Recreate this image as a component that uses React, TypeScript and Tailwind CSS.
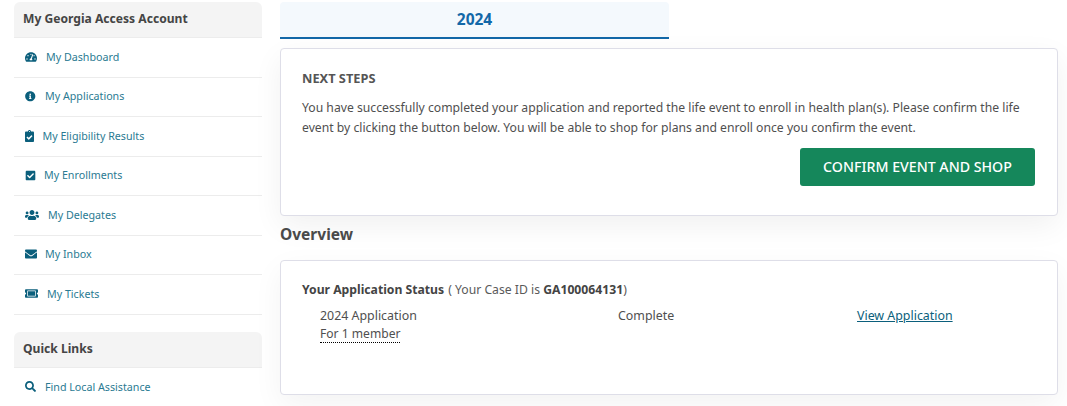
import React from "react";
import { FaTachometerAlt, FaInfoCircle, FaClipboardCheck, FaCheckSquare, FaUsers, FaEnvelope, FaTicketAlt, FaSearch } from "react-icons/fa";

const items = [
  { label: "My Dashboard", Icon: FaTachometerAlt, icon: "w-[12px] h-[12px]", gap: "gap-[9px]" },
  { label: "My Applications", Icon: FaInfoCircle, icon: "w-[10.5px] h-[10.5px]", gap: "gap-[9.5px]" },
  { label: "My Eligibility Results", Icon: FaClipboardCheck, icon: "w-[9px] h-[12px]", gap: "gap-[8.5px]" },
  { label: "My Enrollments", Icon: FaCheckSquare, icon: "w-[11px] h-[11px]", gap: "gap-[8px]" },
  { label: "My Delegates", Icon: FaUsers, icon: "w-[14px] h-[14px]", gap: "gap-[9px]" },
  { label: "My Inbox", Icon: FaEnvelope, icon: "w-[12px] h-[12px]", gap: "gap-[8px]" },
  { label: "My Tickets", Icon: FaTicketAlt, icon: "w-[13px] h-[13px]", gap: "gap-[9px]" },
];

function Row({ label, Icon, icon, gap, border = true }: { label: string; Icon: React.ComponentType<{ className?: string }>; icon: string; gap: string; border?: boolean }) {
  return (
    <a className={`flex h-[39.5px] items-center pb-[1px] pl-[11px] text-[10.7px] text-[#2a7a92] ${gap} ${border ? "border-b border-[#ececec]" : ""}`}>
      <Icon className={`shrink-0 text-[#0b5f7c] ${icon}`} />
      <span>{label}</span>
    </a>
  );
}

function SideHead({ children }: { children: React.ReactNode }) {
  return (
    <div className="flex h-[36px] items-center rounded-t-[6px] border-b border-[#ececec] bg-[#f4f4f4] pl-[9px] text-[12.1px] font-bold text-[#454545]">
      {children}
    </div>
  );
}

export default function App() {
  return (
    <div className="flex h-[406px] w-[1067px] items-start overflow-hidden bg-white pt-[2px] pl-[14px] font-['Noto_Sans',sans-serif] text-[#4f4f4f]">
      <aside className="w-[248px] shrink-0">
        <SideHead>My Georgia Access Account</SideHead>
        {items.map((i) => (
          <Row key={i.label} {...i} />
        ))}
        <div className="mt-[17px]">
          <SideHead>Quick Links</SideHead>
          <Row label="Find Local Assistance" Icon={FaSearch} icon="w-[11px] h-[11px]" gap="gap-[9px]" border={false} />
        </div>
      </aside>
      <main className="ml-[18px] w-[778px] shrink-0">
        <div className="flex h-[37px] w-[389px] items-center justify-center rounded-t-[4px] border-b-2 border-[#1268a8] bg-[#f4f9fd] pt-[1px] text-[15.5px] font-bold text-[#1268a8]">
          2024
        </div>
        <section className="mt-[9px] h-[168px] rounded-[4px] border border-[#dedee8] bg-white pt-[21px] pr-[22px] pl-[21px] shadow-[0_10px_30px_rgba(0,0,0,0.06)]">
          <h2 className="text-[12.8px] leading-[16px] font-bold text-[#555555]">NEXT STEPS</h2>
          <p className="mt-[12px] text-[12.2px] leading-[20px] text-[#4f4f4f]">
            You have successfully completed your application and reported the life event to enroll in health plan(s). Please confirm the life event by clicking the button below. You will be able to shop for plans and enroll once you confirm the event.
          </p>
          <div className="mt-[10px] flex justify-end">
            <button className="flex h-[38px] w-[235px] items-center justify-center rounded-[3px] bg-[#15875b] text-[14.2px] font-medium text-white">
              CONFIRM EVENT AND SHOP
            </button>
          </div>
        </section>
        <h2 className="mt-[7px] text-[15.5px] leading-[22px] font-bold text-[#4a4a4a]">Overview</h2>
        <section className="mt-[15px] h-[135px] rounded-[4px] border border-[#dedee8] bg-white px-[21px] pt-[20px] shadow-[0_10px_30px_rgba(0,0,0,0.05)]">
          <div className="text-[12.2px] leading-[17px]">
            <span className="font-bold text-[#444444]">Your Application Status</span>
            <span className="ml-[4px] text-[#5a5a5a]">( Your Case ID is <b className="text-[#444444]">GA100064131</b>)</span>
          </div>
          <div className="mt-[9px] grid grid-cols-[298px_239px_auto] pl-[18px] text-[12.4px] leading-[18px] text-[#4f4f4f]">
            <div>
              <div>2024 Application</div>
              <span className="border-b border-dotted border-black text-[12.1px]">For 1 member</span>
            </div>
            <div>Complete</div>
            <a className="text-[#0b5f7c] underline">View Application</a>
          </div>
        </section>
      </main>
    </div>
  );
}
